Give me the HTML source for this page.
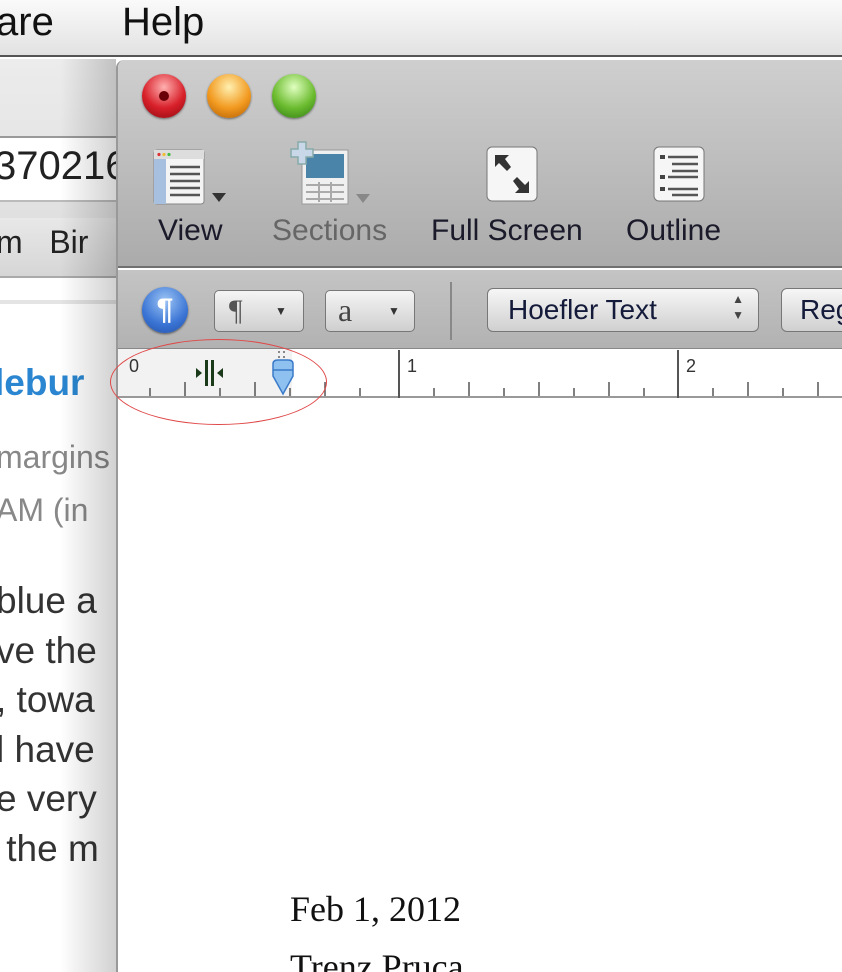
<!DOCTYPE html>
<html><head><meta charset="utf-8"><style>
*{margin:0;padding:0;box-sizing:border-box}
body{width:842px;height:972px;overflow:hidden;position:relative;background:#fff;font-family:"Liberation Sans",sans-serif}
.abs{position:absolute}
</style></head><body>
<!-- menu bar -->
<div class="abs" style="left:0;top:0;width:842px;height:57px;background:linear-gradient(#fafafa,#e2e2e2);border-bottom:2px solid #555"></div>
<div class="abs" style="left:-4px;top:0px;font-size:40px;color:#111">are</div>
<div class="abs" style="left:122px;top:0px;font-size:40px;color:#111">Help</div>

<!-- left back window -->
<div class="abs" style="left:0;top:59px;width:116px;height:913px;background:#fff;overflow:hidden">
<div class="abs" style="left:0;top:0;width:116px;height:160px;background:linear-gradient(#ececec,#e0e0e0)"></div>
<div class="abs" style="left:0;top:77px;width:116px;height:66px;background:#fff;border-top:2px solid #999;border-bottom:2px solid #bbb"></div>
<div class="abs" style="left:-6px;top:85px;font-size:40px;color:#222;white-space:nowrap">370216</div>
<div class="abs" style="left:0;top:159px;width:116px;height:60px;background:linear-gradient(#e8e8e8,#d6d6d6);border-bottom:2px solid #aaa"></div>
<div class="abs" style="left:-4px;top:165px;font-size:32px;color:#222;white-space:nowrap">m&nbsp;&nbsp;&nbsp;Bir</div>
<div class="abs" style="left:0;top:241px;width:116px;height:4px;background:#e4e4e4"></div>
<div class="abs" style="left:-6px;top:303px;font-size:37px;color:#2a86d0;font-weight:bold;white-space:nowrap">lebur</div>
<div class="abs" style="left:-4px;top:372px;font-size:32px;color:#888;line-height:53px;white-space:nowrap">margins<br>AM (in</div>
<div class="abs" style="left:-4px;top:517px;font-size:37px;color:#333;line-height:49.5px;white-space:pre">blue a
ve the
, towa
l have
e very
 the m</div>
<div class="abs" style="left:60px;top:0;width:56px;height:913px;background:linear-gradient(90deg,rgba(0,0,0,0),rgba(0,0,0,.18))"></div>
</div>

<!-- main window -->
<div class="abs" style="left:116px;top:60px;width:726px;height:912px;background:#fff;border-left:2px solid #999;border-radius:8px 0 0 0;overflow:hidden">
  <div class="abs" style="left:0;top:0;width:726px;height:208px;background:linear-gradient(#cfcfcf,#ababab);border-bottom:2px solid #707070"></div>
  <div class="abs" style="left:24px;top:14px;width:44px;height:44px;border-radius:50%;background:radial-gradient(circle at 50% 30%,#ffb0b0,#d8202a 55%,#8c0810);box-shadow:0 1px 2px #666"></div>
  <div class="abs" style="left:41px;top:31px;width:10px;height:10px;border-radius:50%;background:#6a0008"></div>
  <div class="abs" style="left:89px;top:14px;width:44px;height:44px;border-radius:50%;background:radial-gradient(circle at 50% 30%,#fff0b0,#f29a20 55%,#b05a00);box-shadow:0 1px 2px #666"></div>
  <div class="abs" style="left:154px;top:14px;width:44px;height:44px;border-radius:50%;background:radial-gradient(circle at 50% 30%,#e0ffc0,#6cbc30 55%,#2e7a10);box-shadow:0 1px 2px #666"></div>
  <svg class="abs" style="left:34px;top:88px" width="86" height="60" viewBox="0 0 86 60">
    <rect x="2" y="2" width="50" height="54" rx="3" fill="#f4f4f4" stroke="#888"/>
    <rect x="2" y="2" width="50" height="9" fill="#ddd"/>
    <circle cx="7" cy="6.5" r="1.6" fill="#d33"/><circle cx="12" cy="6.5" r="1.6" fill="#eb3"/><circle cx="17" cy="6.5" r="1.6" fill="#4b4"/>
    <rect x="2" y="11" width="12" height="45" fill="#a8c0e0"/>
    <g stroke="#555" stroke-width="2.4"><line x1="18" y1="19" x2="48" y2="19"/><line x1="18" y1="26" x2="48" y2="26"/><line x1="18" y1="33" x2="48" y2="33"/><line x1="18" y1="40" x2="48" y2="40"/><line x1="18" y1="47" x2="48" y2="47"/></g>
    <path d="M60 45 L74 45 L67 54Z" fill="#333"/>
  </svg>
  <svg class="abs" style="left:172px;top:80px" width="90" height="68" viewBox="0 0 90 68">
    <rect x="12" y="10" width="46" height="54" fill="#f0f0f0" stroke="#999"/>
    <rect x="16" y="14" width="38" height="24" fill="#4a84a8"/>
    <g stroke="#aaa" stroke-width="2"><line x1="16" y1="45" x2="54" y2="45"/><line x1="16" y1="52" x2="54" y2="52"/><line x1="16" y1="59" x2="54" y2="59"/><line x1="29" y1="42" x2="29" y2="62"/><line x1="41" y1="42" x2="41" y2="62"/></g>
    <path d="M8 2h8v7h7v8h-7v7h-8v-7h-7v-8h7z" fill="#c8d8e8" stroke="#8aa" stroke-width="1.5"/>
    <path d="M66 54 L80 54 L73 63Z" fill="#888"/>
  </svg>
  <svg class="abs" style="left:367px;top:85px" width="56" height="60" viewBox="0 0 56 60">
    <rect x="2" y="2" width="50" height="54" rx="5" fill="#f6f6f6" stroke="#777"/>
    <path d="M10 10 L24 10 L20 14 L26 22 L22 26 L14 18 L10 22Z" fill="#333"/>
    <path d="M44 48 L30 48 L34 44 L28 36 L32 32 L40 40 L44 36Z" fill="#333"/>
  </svg>
  <svg class="abs" style="left:534px;top:85px" width="56" height="60" viewBox="0 0 56 60">
    <rect x="2" y="2" width="50" height="54" rx="5" fill="#f6f6f6" stroke="#777"/>
    <g fill="#444"><rect x="8" y="10" width="5" height="4"/><rect x="8" y="30" width="5" height="4"/><rect x="8" y="42" width="5" height="4"/></g>
    <g stroke="#555" stroke-width="2.4"><line x1="16" y1="12" x2="46" y2="12"/><line x1="20" y1="19" x2="46" y2="19"/><line x1="20" y1="26" x2="46" y2="26"/><line x1="16" y1="32" x2="46" y2="32"/><line x1="16" y1="44" x2="46" y2="44"/><line x1="20" y1="50" x2="46" y2="50"/></g>
  </svg>
  <div class="abs" style="left:40px;top:154px;font-size:30px;color:#1a1a2a">View</div>
  <div class="abs" style="left:154px;top:154px;font-size:30px;color:#666">Sections</div>
  <div class="abs" style="left:313px;top:154px;font-size:30px;color:#1a1a2a">Full Screen</div>
  <div class="abs" style="left:508px;top:154px;font-size:30px;color:#1a1a2a">Outline</div>
  <div class="abs" style="left:0;top:210px;width:726px;height:78px;background:linear-gradient(#c4c4c4,#b2b2b2)"></div>
  <div class="abs" style="left:24px;top:227px;width:46px;height:46px;border-radius:50%;background:radial-gradient(circle at 50% 30%,#9cc4f4,#3a74d4 60%,#2450a8);box-shadow:0 1px 2px #555;color:#fff;font-size:30px;font-weight:bold;text-align:center;line-height:46px">¶</div>
  <div class="abs" style="left:96px;top:230px;width:90px;height:42px;border:1.5px solid #777;border-radius:5px;background:linear-gradient(#f4f4f4,#cfcfcf);font-family:'Liberation Serif',serif;font-size:30px;color:#555;padding-left:14px;line-height:40px">¶<span style="position:absolute;left:60px;top:0;font-size:12px;color:#333">▼</span></div>
  <div class="abs" style="left:207px;top:230px;width:90px;height:42px;border:1.5px solid #777;border-radius:5px;background:linear-gradient(#f4f4f4,#cfcfcf);font-family:'Liberation Serif',serif;font-size:32px;color:#444;padding-left:12px;line-height:38px">a<span style="position:absolute;left:62px;top:1px;font-size:12px;color:#333;font-family:'Liberation Sans'">▼</span></div>
  <div class="abs" style="left:332px;top:222px;width:2px;height:58px;background:#888"></div>
  <div class="abs" style="left:369px;top:228px;width:272px;height:44px;border:1.5px solid #777;border-radius:6px;background:linear-gradient(#f6f6f6,#d0d0d0);font-size:28px;color:#141a3a;padding-left:20px;line-height:42px">Hoefler Text<span style="position:absolute;right:14px;top:2px;font-size:12px;line-height:16px;color:#444">▲<br>▼</span></div>
  <div class="abs" style="left:663px;top:228px;width:100px;height:44px;border:1.5px solid #777;border-radius:6px;background:linear-gradient(#f6f6f6,#d0d0d0);font-size:28px;color:#141a3a;padding-left:18px;line-height:42px">Reg</div>
  <div class="abs" style="left:0;top:288px;width:726px;height:50px;background:#fff;border-top:1px solid #888;border-bottom:2px solid #999"></div>
  <div class="abs" style="left:0;top:289px;width:174px;height:47px;background:#f2f2f2"></div>
  <svg class="abs" style="left:0;top:288px" width="726" height="52" viewBox="0 0 726 52">
    <g stroke="#555" stroke-width="1.5">
      <line x1="32" y1="40" x2="32" y2="48"/><line x1="67" y1="34" x2="67" y2="48"/><line x1="102" y1="40" x2="102" y2="48"/><line x1="137" y1="34" x2="137" y2="48"/><line x1="172" y1="40" x2="172" y2="48"/><line x1="207" y1="34" x2="207" y2="48"/><line x1="242" y1="40" x2="242" y2="48"/>
      <line x1="316" y1="40" x2="316" y2="48"/><line x1="351" y1="34" x2="351" y2="48"/><line x1="386" y1="40" x2="386" y2="48"/><line x1="421" y1="34" x2="421" y2="48"/><line x1="456" y1="40" x2="456" y2="48"/><line x1="491" y1="34" x2="491" y2="48"/><line x1="526" y1="40" x2="526" y2="48"/>
      <line x1="595" y1="40" x2="595" y2="48"/><line x1="630" y1="34" x2="630" y2="48"/><line x1="665" y1="40" x2="665" y2="48"/><line x1="700" y1="34" x2="700" y2="48"/>
    </g>
    <g stroke="#555" stroke-width="2"><line x1="281" y1="2" x2="281" y2="50"/><line x1="560" y1="2" x2="560" y2="50"/></g>
    <text x="11" y="24" font-family="Liberation Sans" font-size="18" fill="#333">0</text>
    <text x="289" y="24" font-family="Liberation Sans" font-size="18" fill="#333">1</text>
    <text x="568" y="24" font-family="Liberation Sans" font-size="18" fill="#333">2</text>
    <g fill="#1a3a1a"><rect x="87" y="12" width="3" height="26"/><rect x="93" y="12" width="3" height="26"/><path d="M84 25 L78 20 L78 30Z"/><path d="M99 25 L105 20 L105 30Z"/></g>
    <g fill="#888"><rect x="160" y="3" width="2" height="2"/><rect x="165" y="3" width="2" height="2"/><rect x="160" y="8" width="2" height="2"/><rect x="165" y="8" width="2" height="2"/></g>
    <path d="M155 16 Q155 12 160 12 L170 12 Q175 12 175 16 L175 28 L165 46 L155 28Z" fill="#8ec0f0" stroke="#3a7ac8" stroke-width="1.5"/>
    <line x1="155" y1="22" x2="175" y2="22" stroke="#3a7ac8" stroke-width="1.5"/>
  </svg>
  <div class="abs" style="left:172px;top:828px;font-family:'Liberation Serif',serif;font-size:36px;color:#111">Feb 1, 2012</div>
  <div class="abs" style="left:172px;top:886px;font-family:'Liberation Serif',serif;font-size:36px;color:#111">Trenz Pruca</div>
</div>
<div class="abs" style="left:110px;top:339px;width:217px;height:86px;border:1.5px solid #e04848;border-radius:50%"></div>
</body></html>
